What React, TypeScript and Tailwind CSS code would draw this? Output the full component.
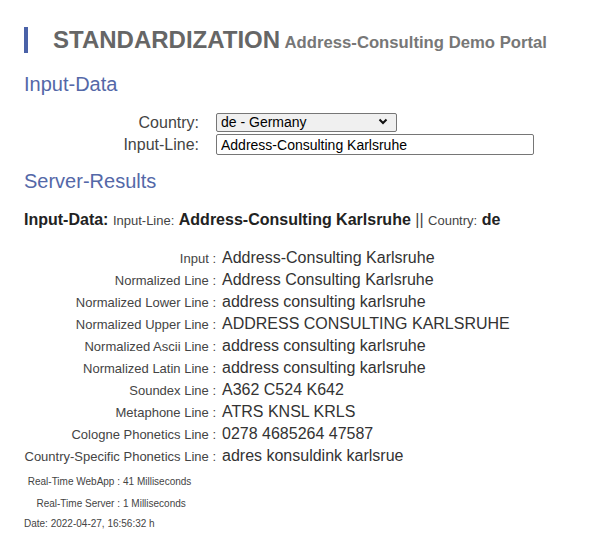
import React from 'react';

const results: [string, string][] = [
  ['Input', 'Address-Consulting Karlsruhe'],
  ['Normalized Line', 'Address Consulting Karlsruhe'],
  ['Normalized Lower Line', 'address consulting karlsruhe'],
  ['Normalized Upper Line', 'ADDRESS CONSULTING KARLSRUHE'],
  ['Normalized Ascii Line', 'address consulting karlsruhe'],
  ['Normalized Latin Line', 'address consulting karlsruhe'],
  ['Soundex Line', 'A362 C524 K642'],
  ['Metaphone Line', 'ATRS KNSL KRLS'],
  ['Cologne Phonetics Line', '0278 4685264 47587'],
  ['Country-Specific Phonetics Line', 'adres konsuldink karlsrue'],
];

const timings: [string, string][] = [
  ['Real-Time WebApp', '41 Milliseconds'],
  ['Real-Time Server', '1 Milliseconds'],
];

const App: React.FC = () => {
  return (
    <div className="min-h-screen bg-white pl-[24px] pt-[27px] font-['Liberation_Sans',Arial,sans-serif] text-[#444]">
      {/* Page Header */}
      <div className="flex items-center">
        <div className="w-[4px] h-[26px] bg-[#4a62a8]"></div>
        <h1 className="ml-[25px] leading-none whitespace-nowrap">
          <span className="text-[24px] font-bold text-[#666]">STANDARDIZATION</span>{' '}
          <span className="text-[16.7px] font-bold text-[#777]">Address-Consulting Demo Portal</span>
        </h1>
      </div>

      {/* Input-Data */}
      <h2 className="mt-[20px] text-[20px] leading-[23px] text-[#5468a8]">Input-Data</h2>
      <div className="mt-[16px] grid grid-cols-[175px_auto] gap-x-[17px] gap-y-[2px] items-center text-[16px] leading-[19px]">
        <label className="text-right">Country:</label>
        <div className="relative w-[181px]">
          <select
            defaultValue="de"
            className="appearance-none w-full h-[19px] border border-[#767676] rounded-[2px] bg-[#f0f0f0] pl-[4px] text-[14px] leading-[17px] text-black font-['Liberation_Sans',Arial,sans-serif]"
          >
            <option value="de">de - Germany</option>
          </select>
          <svg
            className="absolute right-[9px] top-[6px] pointer-events-none"
            width="10"
            height="7"
            viewBox="0 0 10 7"
          >
            <path d="M1.5 1.5 L5 5 L8.5 1.5" fill="none" stroke="#111" strokeWidth="2" />
          </svg>
        </div>
        <label className="text-right">Input-Line:</label>
        <input
          type="text"
          defaultValue="Address-Consulting Karlsruhe"
          className="w-[318px] h-[21px] border border-[#767676] rounded-[2px] bg-white px-[4px] text-[14px] text-black font-['Liberation_Sans',Arial,sans-serif]"
        />
      </div>

      {/* Server-Results */}
      <h2 className="mt-[15px] text-[20px] leading-[23px] text-[#5468a8]">Server-Results</h2>
      <p className="mt-[17px] text-[#222] leading-[19px] whitespace-nowrap">
        <span className="text-[16px] font-bold">Input-Data:</span>{' '}
        <span className="text-[13px] text-[#444]">Input-Line:</span>{' '}
        <span className="text-[16px] font-bold">Address-Consulting Karlsruhe</span>{' '}
        <span className="text-[16px] text-[#444]">||</span>{' '}
        <span className="text-[13px] text-[#444]">Country:</span>{' '}
        <span className="text-[16px] font-bold">de</span>
      </p>

      <div className="mt-[17px] grid grid-cols-[192px_auto] auto-rows-[22px] items-baseline">
        {results.map(([label, value]) => (
          <React.Fragment key={label}>
            <div className="text-right text-[13px] leading-[22px] text-[#444] whitespace-nowrap">{label} :</div>
            <div className="pl-[6px] text-[16px] leading-[22px] text-[#333] whitespace-nowrap">{value}</div>
          </React.Fragment>
        ))}
      </div>

      {/* Timings */}
      <div className="mt-[4px] grid grid-cols-[96px_auto] auto-rows-[22px] items-baseline text-[10px] text-[#444]">
        {timings.map(([label, value]) => (
          <React.Fragment key={label}>
            <div className="text-right leading-[22px] whitespace-nowrap">{label} :</div>
            <div className="pl-[3px] leading-[22px] whitespace-nowrap">{value}</div>
          </React.Fragment>
        ))}
      </div>
      <div className="text-[10px] leading-[18px] text-[#444]">Date: 2022-04-27, 16:56:32 h</div>
    </div>
  );
};

export default App;
